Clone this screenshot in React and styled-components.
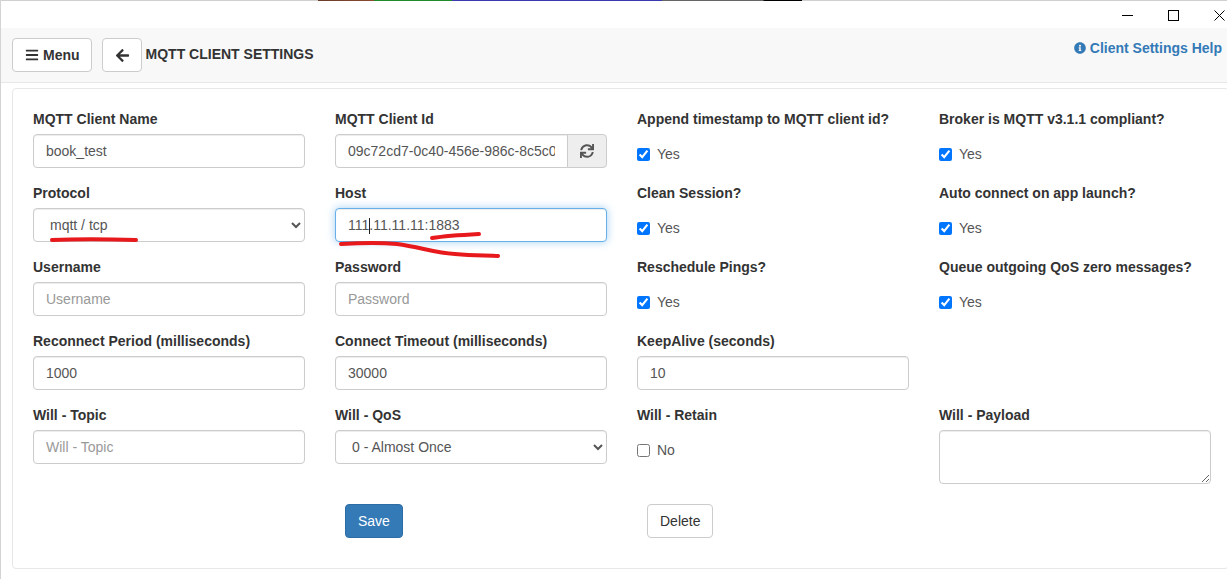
import React from 'react';
import styled, { createGlobalStyle } from 'styled-components';
import { FaBars, FaArrowLeft, FaSync, FaInfoCircle } from 'react-icons/fa';

const GlobalStyle = createGlobalStyle`
  * { box-sizing: border-box; }
  html, body { margin: 0; padding: 0; background: #fff; overflow: hidden; }
  body {
    font-family: "Liberation Sans", Arial, sans-serif;
    font-size: 14px;
    line-height: 20px;
    color: #333;
  }
`;

const Page = styled.div`
  width: 1227px;
  height: 579px;
  border-left: 1px solid #d4d4d4;
  position: relative;
  overflow: hidden;
`;

const TopEdge = styled.div`
  height: 1px;
  margin-left: -1px;
  background: #d0d0d0;
  padding-left: 318px;
`;

const TopStrip = styled.div`
  width: 484px;
  height: 1px;
  background: linear-gradient(90deg,
    #6b3a28 0%, #8a4a30 11.5%,
    #1f8a2a 11.6%, #1f8a2a 27.7%,
    #3a3ab0 27.8%, #3a3ab0 71%,
    #666 71.1%, #666 92%,
    #000 92.1%, #000 100%);
`;

const TitleBar = styled.div`
  height: 27px;
  display: flex;
  justify-content: flex-end;
  align-items: center;
  gap: 35px;
  padding-right: 2px;
  background: #fff;
`;

const WindowIcon = styled.svg`
  width: 11px;
  height: 11px;
  display: block;
  fill: none;
  stroke: #000;
  stroke-width: 1;
  margin-top: 2px;
`;

const Header = styled.header`
  height: 55px;
  background: #f8f8f8;
  border-bottom: 1px solid #e7e7e7;
  display: flex;
  align-items: flex-start;
  padding: 10px 5px 0 11px;
`;

const NavButton = styled.button`
  height: 34px;
  padding: 0 11px 0 12px;
  margin-right: ${p => p.$gap || 0}px;
  background: #fff;
  border: 1px solid #ccc;
  border-radius: 4px;
  color: #333;
  font: bold 14px/20px "Liberation Sans", Arial, sans-serif;
  display: inline-flex;
  align-items: center;
  gap: 4px;
`;

const PageTitle = styled.div`
  font-size: 14px;
  font-weight: bold;
  line-height: 32px;
  margin-left: 4px;
  height: 32px;
`;

const HelpLink = styled.a`
  margin-left: auto;
  color: #337ab7;
  font-weight: bold;
  display: inline-flex;
  align-items: center;
  gap: 4px;
`;

const Panel = styled.form`
  height: 481px;
  margin: 5px -2px 0 11px;
  border: 1px solid #e7e7e7;
  border-radius: 4px;
  background: #fff;
  padding: 20px 0 0 20px;
`;

const FieldGrid = styled.div`
  display: grid;
  grid-template-columns: repeat(4, 272px);
  grid-auto-rows: 59px;
  column-gap: 30px;
  row-gap: 15px;
`;

const Field = styled.div`
  min-width: 0;
`;

const Label = styled.label`
  display: block;
  font-weight: bold;
  line-height: 20px;
  margin-bottom: 5px;
  white-space: nowrap;
`;

const controlStyle = `
  display: block;
  width: 100%;
  height: 34px;
  padding: 6px 12px;
  background: #fff;
  border: 1px solid #ccc;
  border-radius: 4px;
  color: #555;
  font: 14px/20px "Liberation Sans", Arial, sans-serif;
  box-shadow: inset 0 1px 1px rgba(0,0,0,.075);
  outline: none;
  &::placeholder { color: #999; opacity: 1; }
`;

const Input = styled.input`
  ${controlStyle}
  ${p => p.$focused && `
    border-color: #66afe9;
    box-shadow: inset 0 1px 1px rgba(0,0,0,.075), 0 0 8px rgba(102,175,233,.6);
  `}
`;

const Select = styled.select`
  ${controlStyle}
`;

const TextArea = styled.textarea`
  ${controlStyle}
  height: 54px;
`;

const InputGroup = styled.div`
  display: flex;
  ${Input} {
    border-radius: 4px 0 0 4px;
    flex: 1;
    min-width: 0;
  }
`;

const Addon = styled.div`
  width: 40px;
  height: 34px;
  flex: none;
  margin-left: -1px;
  display: flex;
  align-items: center;
  justify-content: center;
  background: #eee;
  border: 1px solid #ccc;
  border-radius: 0 4px 4px 0;
  color: #555;
`;

const HostWrap = styled.div`
  position: relative;
`;

const Caret = styled.span`
  position: absolute;
  left: 34px;
  top: 10px;
  width: 1px;
  height: 16px;
  background: #222;
`;

const CheckRow = styled.label`
  display: flex;
  align-items: center;
  gap: 7px;
  height: 20px;
  margin-top: 15px;
  color: #555;
`;

const Check = styled.input`
  width: 13px;
  height: 13px;
  margin: 0;
  accent-color: #0075ff;
`;

const ButtonRow = styled.div`
  display: grid;
  grid-template-columns: repeat(4, 272px);
  column-gap: 30px;
  margin-top: 40px;
`;

const ActionCell = styled.div`
  grid-column: ${p => p.$col};
  padding-left: ${p => p.$indent || 0}px;
`;

const ActionButton = styled.button`
  height: 34px;
  padding: 6px 12px;
  border-radius: 4px;
  border: 1px solid ${p => (p.$primary ? '#2e6da4' : '#ccc')};
  background: ${p => (p.$primary ? '#337ab7' : '#fff')};
  color: ${p => (p.$primary ? '#fff' : '#333')};
  font: 14px/20px "Liberation Sans", Arial, sans-serif;
`;

const Scribbles = styled.svg`
  position: absolute;
  left: -1px;
  top: 0;
  width: 1227px;
  height: 579px;
  pointer-events: none;
  fill: none;
  stroke: #e8191c;
  stroke-width: 4;
  stroke-linecap: round;
  stroke-linejoin: round;
`;

const fields = [
  { label: 'MQTT Client Name', value: 'book_test' },
  { label: 'MQTT Client Id', kind: 'clientId', value: '09c72cd7-0c40-456e-986c-8c5c0b2e7a11' },
  { label: 'Append timestamp to MQTT client id?', kind: 'check' },
  { label: 'Broker is MQTT v3.1.1 compliant?', kind: 'check' },
  { label: 'Protocol', kind: 'select', options: ['mqtt / tcp'] },
  { label: 'Host', kind: 'host', value: '111.11.11.11:1883' },
  { label: 'Clean Session?', kind: 'check' },
  { label: 'Auto connect on app launch?', kind: 'check' },
  { label: 'Username', placeholder: 'Username' },
  { label: 'Password', placeholder: 'Password' },
  { label: 'Reschedule Pings?', kind: 'check' },
  { label: 'Queue outgoing QoS zero messages?', kind: 'check' },
  { label: 'Reconnect Period (milliseconds)', value: '1000' },
  { label: 'Connect Timeout (milliseconds)', value: '30000' },
  { label: 'KeepAlive (seconds)', value: '10' },
  { kind: 'empty' },
  { label: 'Will - Topic', placeholder: 'Will - Topic' },
  { label: 'Will - QoS', kind: 'select', options: ['0 - Almost Once'] },
  { label: 'Will - Retain', kind: 'uncheck' },
  { label: 'Will - Payload', kind: 'textarea' },
];

const renderControl = f => {
  switch (f.kind) {
    case 'clientId':
      return (
        <InputGroup>
          <Input defaultValue={f.value} />
          <Addon><FaSync size={14} /></Addon>
        </InputGroup>
      );
    case 'host':
      return (
        <HostWrap>
          <Input $focused defaultValue={f.value} />
          <Caret />
        </HostWrap>
      );
    case 'select':
      return <Select>{f.options.map(o => <option key={o}>{o}</option>)}</Select>;
    case 'textarea':
      return <TextArea />;
    case 'check':
      return <CheckRow><Check type="checkbox" defaultChecked />Yes</CheckRow>;
    case 'uncheck':
      return <CheckRow><Check type="checkbox" />No</CheckRow>;
    default:
      return <Input defaultValue={f.value} placeholder={f.placeholder} />;
  }
};

export default function App() {
  return (
    <Page>
      <GlobalStyle />
      <TopEdge><TopStrip /></TopEdge>
      <TitleBar>
        <WindowIcon viewBox="0 0 11 11"><path d="M0 5.5H11" /></WindowIcon>
        <WindowIcon viewBox="0 0 11 11"><rect x="0.5" y="0.5" width="10" height="10" /></WindowIcon>
        <WindowIcon viewBox="0 0 11 11"><path d="M0.5 0.5L10.5 10.5M10.5 0.5L0.5 10.5" /></WindowIcon>
      </TitleBar>
      <Header>
        <NavButton $gap={10}><FaBars size={14} /> Menu</NavButton>
        <NavButton><FaArrowLeft size={15} /></NavButton>
        <PageTitle>MQTT CLIENT SETTINGS</PageTitle>
        <HelpLink><FaInfoCircle size={12} /> Client Settings Help</HelpLink>
      </Header>
      <Panel>
        <FieldGrid>
          {fields.map((f, i) => (
            <Field key={i}>
              {f.label && <Label>{f.label}</Label>}
              {f.kind !== 'empty' && renderControl(f)}
            </Field>
          ))}
        </FieldGrid>
        <ButtonRow>
          <ActionCell $col={2} $indent={10}><ActionButton type="button" $primary>Save</ActionButton></ActionCell>
          <ActionCell $col={3} $indent={10}><ActionButton type="button">Delete</ActionButton></ActionCell>
        </ButtonRow>
      </Panel>
      <Scribbles viewBox="0 0 1227 579">
        <path d="M52 240C75 239 105 239 136 240" />
        <path d="M432 238C445 236 460 235 479 234" />
        <path d="M341 244C360 243 385 243 397 244C420 247 435 253 455 254C475 256 490 255 498 256" />
      </Scribbles>
    </Page>
  );
}
